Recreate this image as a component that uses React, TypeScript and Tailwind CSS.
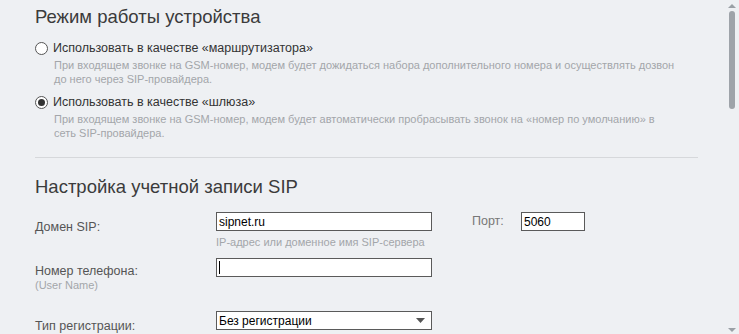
import React from "react";

function Radio({ checked }: { checked?: boolean }) {
  return (
    <span className="mt-[1px] flex h-[13px] w-[13px] shrink-0 items-center justify-center rounded-full border border-[#555] bg-white">
      {checked && <span className="h-[7px] w-[7px] rounded-full bg-[#333]" />}
    </span>
  );
}

function ModeOption({ label, desc, checked }: { label: string; desc: string[]; checked?: boolean }) {
  return (
    <div className="flex flex-col">
      <label className="flex items-center gap-[5px] text-[12.5px] leading-[16px] text-[#333]">
        <Radio checked={checked} />
        {label}
      </label>
      <div className="ml-[19px] mt-[2px] text-[11px] leading-[14px] text-[#a3a6aa]">
        {desc.map((d) => (
          <div key={d}>{d}</div>
        ))}
      </div>
    </div>
  );
}

function TextBox({ value, width, caret }: { value?: string; width: string; caret?: boolean }) {
  return (
    <div className={`flex h-[19px] items-center border border-[#5a5a5a] bg-white px-[2px] text-[12px] text-black ${width}`}>
      {value}
      {caret && <span className="h-[13px] w-px bg-black" />}
    </div>
  );
}

export default function App() {
  return (
    <div className="flex h-[334px] w-[739px] overflow-hidden bg-[#eef0f3] font-['Liberation_Sans',Arial,sans-serif]">
      <div className="flex-1 pl-[35px] pr-[27px] pt-[6px]">
        <h2 className="text-[18.5px] leading-[22px] text-[#3b3b3b]">Режим работы устройства</h2>

        <div className="mt-[12px] flex flex-col gap-[8px]">
          <ModeOption
            label="Использовать в качестве «маршрутизатора»"
            desc={[
              "При входящем звонке на GSM-номер, модем будет дожидаться набора дополнительного номера и осуществлять дозвон",
              "до него через SIP-провайдера.",
            ]}
          />
          <ModeOption
            checked
            label="Использовать в качестве «шлюза»"
            desc={[
              "При входящем звонке на GSM-номер, модем будет автоматически пробрасывать звонок на «номер по умолчанию» в",
              "сеть SIP-провайдера.",
            ]}
          />
        </div>

        <div className="mt-[17px] h-px bg-[#d6d8db]" />

        <h2 className="mt-[18px] text-[18.5px] leading-[22px] text-[#3b3b3b]">Настройка учетной записи SIP</h2>

        <div className="mt-[14px] grid grid-cols-[181px_1fr] text-[12.5px] text-[#555]">
          <div className="pt-[7px] leading-[16px]">Домен SIP:</div>
          <div>
            <div className="flex items-center">
              <TextBox value="sipnet.ru" width="w-[216px]" />
              <span className="ml-[40px] w-[49px] text-[#777]">Порт:</span>
              <TextBox value="5060" width="w-[64px]" />
            </div>
            <div className="mt-[4px] text-[11px] leading-[14px] text-[#a3a6aa]">IP-адрес или доменное имя SIP-сервера</div>
          </div>

          <div className="mt-[9px] pt-[6px] leading-[14px]">
            <div>Номер телефона:</div>
            <div className="text-[11px] text-[#a3a6aa]">(User Name)</div>
          </div>
          <div className="mt-[9px]">
            <TextBox width="w-[216px]" caret />
          </div>

          <div className="mt-[19px] pt-[7px] leading-[16px]">Тип регистрации:</div>
          <div className="mt-[19px]">
            <div className="flex h-[19px] w-[216px] items-center justify-between border border-[#5a5a5a] bg-white pl-[2px] pr-[6px] text-[12px] text-black">
              Без регистрации
              <svg width="9" height="5" viewBox="0 0 9 5">
                <path d="M0 0h9L4.5 5z" fill="#555" />
              </svg>
            </div>
          </div>
        </div>
      </div>

      <div className="flex w-[14px] flex-col items-center justify-between pb-[2px] pt-[4px]">
        <div className="flex flex-col items-center">
          <svg width="8" height="4" viewBox="0 0 8 4">
            <path d="M0 4h8L4 0z" fill="#9aa0a6" />
          </svg>
          <div className="mt-[3px] h-[98px] w-[6px] rounded-full bg-[#9ea3a9]" />
        </div>
        <svg width="8" height="4" viewBox="0 0 8 4">
          <path d="M0 0h8L4 4z" fill="#9aa0a6" />
        </svg>
      </div>
    </div>
  );
}
